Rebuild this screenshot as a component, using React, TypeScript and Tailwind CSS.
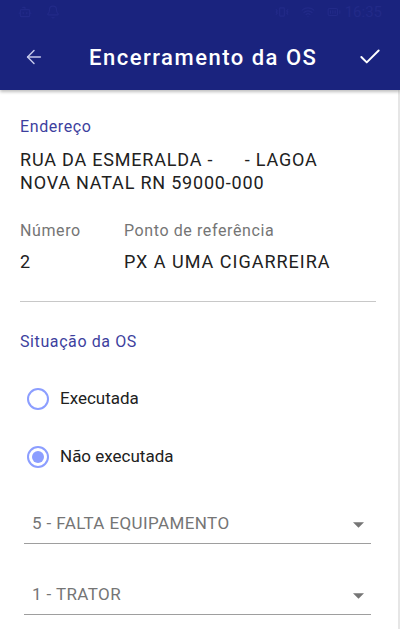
import { ArrowLeft, Check, Wifi, Vibrate, BatteryFull, Bell, Bot } from "lucide-react";

const Radio = ({ checked, label }: { checked: boolean; label: string }) => (
  <div className="flex items-center h-[48px]">
    <div className="ml-[7px] w-[22px] h-[22px] rounded-full border-2 border-[#8c9eff] flex items-center justify-center">
      {checked && <div className="w-[12px] h-[12px] rounded-full bg-[#8c9eff]" />}
    </div>
    <span className="ml-[11px] text-[17px] text-[#212121]">{label}</span>
  </div>
);

const Select = ({ value }: { value: string }) => (
  <div className="ml-[4px] mr-[7px] h-[40px] border-b border-[#9e9e9e] flex items-center pl-[8px] pr-[7px]">
    <span className="flex-1 text-[17px] tracking-[0.4px] text-[#757575]">{value}</span>
    <svg width="11" height="6" viewBox="0 0 10 5" className="mb-[-2px]">
      <path d="M0 0 L10 0 L5 5 Z" fill="#757575" />
    </svg>
  </div>
);

export default function App() {
  return (
    <div
      className="w-[400px] h-[629px] overflow-hidden bg-white flex flex-col relative"
      style={{ fontFamily: "Roboto, 'Noto Sans', sans-serif" }}
    >
      <div className="bg-[#1a237e] shadow-[0_2px_3px_rgba(0,0,0,0.25)] z-10">
        <div className="h-6 flex items-center px-[18px] text-[#222a88]">
          <Bot size={14} />
          <Bell size={14} className="ml-[14px]" />
          <div className="flex-1" />
          <Vibrate size={14} />
          <Wifi size={14} className="ml-[12px]" />
          <BatteryFull size={14} className="ml-[12px]" />
          <span className="ml-[4px] text-[15px]">16:35</span>
        </div>
        <div className="h-[66px] flex items-center text-white">
          <ArrowLeft size={22} strokeWidth={1.6} className="ml-[23px] text-[#c5c8ea]" />
          <span className="ml-[44px] text-[22px] tracking-[1.5px] font-medium flex-1">Encerramento da OS</span>
          <Check size={26} strokeWidth={1.8} className="mr-[17px]" />
        </div>
      </div>

      <div className="flex-1 flex border-r-2 border-[#e6e6e6]">
        <div className="flex-1 px-5">
          <div className="pt-[27px] text-[16px] tracking-[0.6px] leading-[20px] text-[#3d3f9e]">Endereço</div>
          <div className="mt-[11px] text-[18px] tracking-[0.8px] leading-[23px] text-[#212121] whitespace-pre">
            {"RUA DA ESMERALDA -      - LAGOA\nNOVA NATAL RN 59000-000"}
          </div>

          <div className="mt-[27px] flex text-[16px] tracking-[0.6px] leading-[20px] text-[#757575]">
            <span className="w-[104px]">Número</span>
            <span>Ponto de referência</span>
          </div>
          <div className="mt-[9px] flex text-[18px] tracking-[1px] leading-[23px] text-[#212121]">
            <span className="w-[104px]">2</span>
            <span>PX A UMA CIGARREIRA</span>
          </div>

          <div className="mt-[28px] mr-[2px] border-t border-[#c8c8c8]" />

          <div className="mt-[30px] text-[16px] tracking-[0.6px] leading-[20px] text-[#3d3f9e]">Situação da OS</div>

          <div className="mt-[23px]">
            <Radio checked={false} label="Executada" />
            <div className="h-[10px]" />
            <Radio checked label="Não executada" />
          </div>

          <div className="mt-[23px]">
            <Select value="5 - FALTA EQUIPAMENTO" />
            <div className="h-[31px]" />
            <Select value="1 - TRATOR" />
          </div>
        </div>
      </div>
    </div>
  );
}
